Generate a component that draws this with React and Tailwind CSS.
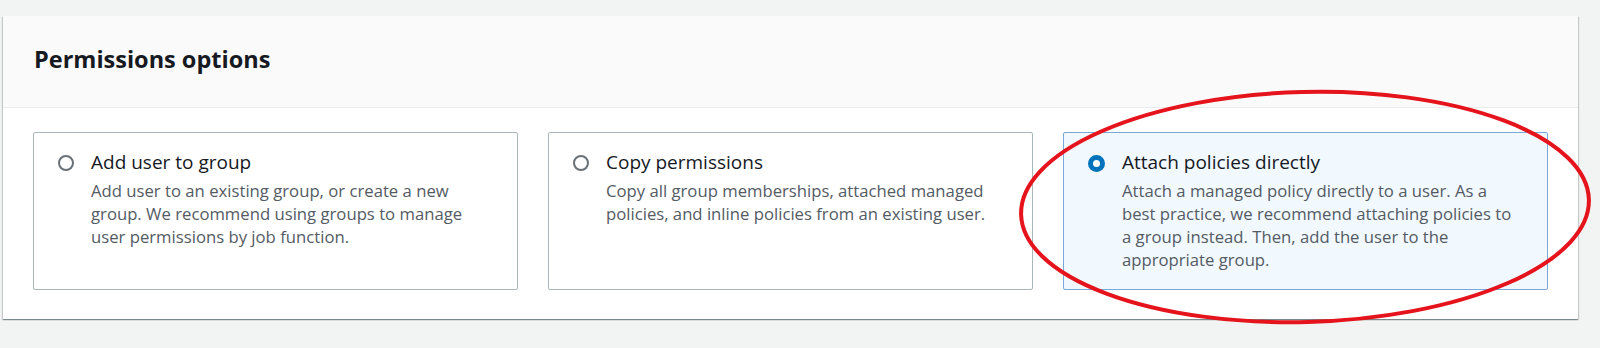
const options = [
  {
    id: 'group',
    title: 'Add user to group',
    text: 'Add user to an existing group, or create a new group. We recommend using groups to manage user permissions by job function.',
  },
  {
    id: 'copy',
    title: 'Copy permissions',
    text: 'Copy all group memberships, attached managed policies, and inline policies from an existing user.',
  },
  {
    id: 'attach',
    title: 'Attach policies directly',
    text: 'Attach a managed policy directly to a user. As a best practice, we recommend attaching policies to a group instead. Then, add the user to the appropriate group.',
  },
]

function Radio({ checked }) {
  if (checked) {
    return <span className="block w-[17px] h-[17px] rounded-full border-[5px] border-[#0073bb] bg-white" />
  }
  return <span className="block w-4 h-4 rounded-full border-2 border-[#687078] bg-white" />
}

export default function App() {
  const selected = 'attach'

  return (
    <div className="relative min-h-screen bg-[#f2f3f3] pt-4 font-['Open_Sans',sans-serif]">
      <div className="ml-[3px] w-[1575px] bg-white shadow-[0_1px_1px_0_rgba(0,28,36,0.3),1px_1px_1px_0_rgba(0,28,36,0.15),-1px_1px_1px_0_rgba(0,28,36,0.15)]">
        <div className="h-[92px] bg-[#fafafa] border-b border-[#eaeded] px-[31px] flex items-center">
          <h2 className="text-[23.5px] font-bold text-[#16191f] -mt-1">Permissions options</h2>
        </div>

        <div className="px-[30px] pt-6 pb-[29px] grid grid-cols-3 gap-[30px]">
          {options.map((opt) => {
            const isOn = opt.id === selected
            return (
              <div
                key={opt.id}
                className={
                  isOn
                    ? 'rounded-[2px] border border-[#7aa7d9] bg-[#f1f8fe] pl-6 pr-6 pt-[16px] pb-[18px] flex gap-[17px]'
                    : 'rounded-[2px] border border-[#aab7b8] bg-white pl-6 pr-6 pt-[16px] pb-[18px] flex gap-[17px]'
                }
              >
                <div className="pt-[6px]">
                  <Radio checked={isOn} />
                </div>
                <div>
                  <p className="text-[19px] leading-[26px] text-[#16191f]">{opt.title}</p>
                  <p className="mt-[4px] text-[16.7px] leading-[23px] text-[#545b64]">{opt.text}</p>
                </div>
              </div>
            )
          })}
        </div>
      </div>

      {/* hand-drawn highlight around the selected option */}
      <svg className="absolute inset-0 pointer-events-none" width="1600" height="348">
        <ellipse
          cx="1305"
          cy="207"
          rx="284"
          ry="115"
          fill="none"
          stroke="#e5131b"
          strokeWidth="4"
          transform="rotate(-1.5 1305 207)"
        />
      </svg>
    </div>
  )
}
